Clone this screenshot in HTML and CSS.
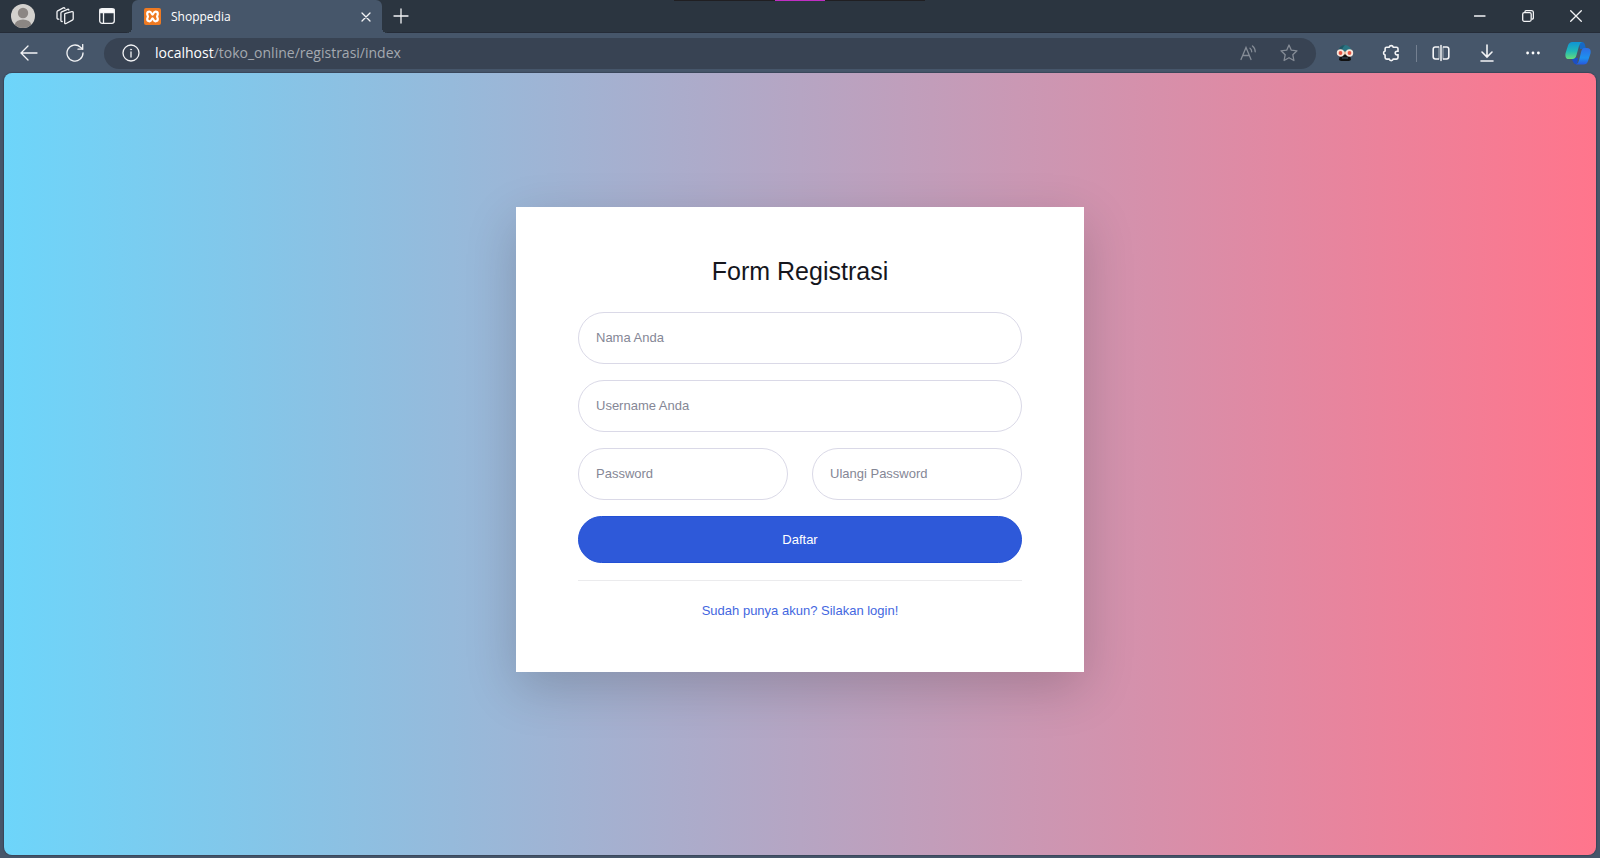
FILE: index.html
```html
<!DOCTYPE html>
<html lang="id">
<head>
<meta charset="utf-8">
<title>Shoppedia</title>
<link rel="stylesheet" href="styles.css">
</head>
<body>
<div class="browser">
  <header class="tabbar">
    <div class="tab-tools">
      <button class="icon-btn" aria-label="Profil"><svg width="24" height="24" viewBox="0 0 24 24"><defs><clipPath id="face"><circle cx="12" cy="12" r="12"/></clipPath></defs><g clip-path="url(#face)"><rect width="24" height="24" fill="#d3d1ce"/><circle cx="12" cy="9" r="5.2" fill="#8b8683"/><ellipse cx="12" cy="21" rx="8.2" ry="5.6" fill="#8b8683"/></g></svg></button>
      <button class="icon-btn" aria-label="Ruang kerja"><svg width="18" height="18" viewBox="0 0 18 18" class="line"><path d="M9.600 6.300l6.200-1.700q1.400-.3 1.400 1v6.200q0 .9-.9 1.300l-6.200 3.400q-1.400.6-1.400-.8V7.300q0-.8.900-1z"/><path d="M6.200 14.500q-1.300.2-1.300-1V6.200q0-.9.800-1.300L11.500 2.300q1.100-.3 1.400.7"/><path d="M2.800 12.200Q1 12.300 1 10.800V5q0-.8.700-1.200L7.300.9q1-.4 1.600.4"/></svg></button>
      <button class="icon-btn" aria-label="Menu tab"><svg width="18" height="18" viewBox="0 0 18 18" class="line"><rect x="1.700" y="1.700" width="14.600" height="14.600" rx="2.500"/><path d="M2 2.500h14v3H2z" fill="#fff"/><path d="M5.500 6v10"/></svg></button>
    </div>
    <div class="tab">
      <svg width="17" height="17" viewBox="0 0 17 17"><rect width="17" height="17" rx="2" fill="#ef7a22"/><path d="M8.500 6.600C7.600 6.600 7.600 3.700 5.500 3.700c-1.400 0-2.300.9-2.300 2.200 0 1.100.7 1.700.7 2.600s-.7 1.500-.7 2.600c0 1.300.9 2.200 2.300 2.200 2.100 0 2.100-2.900 3-2.900s.9 2.900 3 2.900c1.400 0 2.300-.9 2.300-2.200 0-1.100-.7-1.700-.7-2.600s.7-1.500.7-2.600c0-1.300-.9-2.200-2.300-2.200-2.100 0-2.100 2.900-3 2.900z" fill="none" stroke="#fff" stroke-width="2.200"/></svg>
      <span class="tab-title">Shoppedia</span>
      <button class="icon-btn tab-close" aria-label="Tutup tab"><svg width="10" height="10" viewBox="0 0 10 10" class="line"><path d="M1 1l8 8M9 1L1 9"/></svg></button>
    </div>
    <button class="icon-btn new-tab" aria-label="Tab baru"><svg width="16" height="16" viewBox="0 0 16 16" class="line"><path d="M8 1v14M1 8h14"/></svg></button>
    <div class="top-strip"><i></i></div>
    <div class="window-controls">
      <button class="icon-btn" aria-label="Kecilkan"><svg width="12" height="12" viewBox="0 0 12 12" class="line"><path d="M.500 6h10.500"/></svg></button>
      <button class="icon-btn" aria-label="Pulihkan"><svg width="12" height="12" viewBox="0 0 12 12" class="line"><rect x=".7" y="2.700" width="8.500" height="8.600" rx="1.500"/><path d="M3 1.400Q3.400.7 4.300.7H9.500q1.900 0 1.900 1.900v5q0 1-.9 1.500"/></svg></button>
      <button class="icon-btn" aria-label="Tutup"><svg width="12" height="12" viewBox="0 0 12 12" class="line"><path d="M.7.700l10.600 10.600M11.300.7L.7 11.300"/></svg></button>
    </div>
  </header>
  <nav class="toolbar">
    <div class="group">
      <button class="icon-btn" aria-label="Kembali"><svg width="18" height="16" viewBox="0 0 18 16" class="line"><path d="M17 8H1M8 1L1 8l7 7"/></svg></button>
      <button class="icon-btn" aria-label="Muat ulang"><svg width="18" height="18" viewBox="0 0 18 18" class="line"><path d="M17 9a8 8 0 1 1-2.500-5.800L16.500 5"/><path d="M16.700.5v4.700H12"/></svg></button>
    </div>
    <div class="address">
      <svg width="18" height="18" viewBox="0 0 18 18" class="line"><circle cx="9" cy="9" r="8"/><path d="M9 8v5"/><circle cx="9" cy="5.500" r=".6" fill="#fff" stroke-width=".6"/></svg>
      <div class="url"><b>localhost</b>/toko_online/registrasi/index</div>
      <button class="icon-btn dim" aria-label="Baca keras"><svg width="18" height="16" viewBox="0 0 18 16" class="line"><path d="M2 14.500L7 2.500l5 12M3.700 10.500h6.600M11 3.200q1.700 1.200 1.700 3.600M13.500.9q2.700 2.200 2.700 5.900"/></svg></button>
      <button class="icon-btn dim" aria-label="Favorit"><svg width="18" height="18" viewBox="0 0 18 18" class="line"><path d="M9 1l2.300 5.200 5.700.6-4.200 3.900 1.100 5.800L9 13.700l-4.900 2.800 1.100-5.800L1 6.800l5.700-.6z" stroke-linejoin="round"/></svg></button>
    </div>
    <div class="group">
      <button class="icon-btn" aria-label="Ekstensi penyamaran"><svg width="18" height="18" viewBox="0 0 18 18"><path d="M2.500 8.500V7.500a6.500 6.500 0 0 1 13 0v1z" fill="#2a7583"/><path d="M9 1a6.500 6.500 0 0 0-6.500 7H6q0-4.500 3-7z" fill="#205563"/><path d="M4 7.500h10V11H4z" fill="#e9b99b"/><path d="M3 16Q3 10.500 9 10.500T15 16l-2 1H5z" fill="#111"/><path d="M6 14h6" stroke="#46566a"/><circle cx="4.500" cy="9" r="2.800" fill="#e75442" stroke="#f6e5da" stroke-width="1.800"/><circle cx="13.500" cy="9" r="2.800" fill="#e75442" stroke="#f6e5da" stroke-width="1.800"/></svg></button>
      <button class="icon-btn" aria-label="Ekstensi"><svg width="18" height="18" viewBox="0 0 18 18" class="line bold"><path d="M4.600 3.200h2.500a2.200 2.200 0 0 1 4.200 0h3.200q1.500 0 1.500 1.500v2.600h-1a1.800 1.800 0 0 0 0 3.600h1v2.700q0 1.500-1.500 1.500h-3.200a2.200 2.200 0 0 1-4.200 0H4.600q-1.500 0-1.500-1.500v-2.500a2.200 2.200 0 0 1 0-4.200V4.700q0-1.500 1.500-1.500z"/></svg></button>
      <span class="separator"></span>
      <button class="icon-btn" aria-label="Layar terpisah"><svg width="18" height="18" viewBox="0 0 18 18" class="line"><rect x="1.200" y="3" width="15.600" height="12" rx="2.200" stroke-width="1.600"/><path d="M9 1v16" stroke="#46566a" stroke-width="4" stroke-linecap="butt"/><path d="M7 3v12M11 3v12" stroke-width=".8" opacity=".7"/><path d="M9 1.500v15" stroke-width="1.500"/></svg></button>
      <button class="icon-btn" aria-label="Unduhan"><svg width="14" height="18" viewBox="0 0 14 18" class="line bold"><path d="M7 1v12M2 8l5 5 5-5M1 17h12"/></svg></button>
      <button class="icon-btn" aria-label="Lainnya"><svg width="14" height="4" viewBox="0 0 14 4" fill="#fff"><circle cx="1.600" cy="2" r="1.400"/><circle cx="7" cy="2" r="1.400"/><circle cx="12.400" cy="2" r="1.400"/></svg></button>
      <button class="icon-btn copilot" aria-label="Copilot"><svg width="26" height="24" viewBox="0 0 26 24"><defs><linearGradient id="ca" x1="0" y1="0" x2="0" y2="1"><stop offset="0" stop-color="#0f93d4"/><stop offset=".55" stop-color="#22b8b5"/><stop offset="1" stop-color="#66dc7c"/></linearGradient><linearGradient id="cb" x1="0" y1="0" x2="0" y2="1"><stop offset="0" stop-color="#2e6de5"/><stop offset=".6" stop-color="#1e90ee"/><stop offset="1" stop-color="#2759dd"/></linearGradient></defs><path d="M14 1h3.500q1.800 0 2.400 2.500L21 8h-6z" fill="#1769c4"/><path d="M6 17h7l-1 6.500q-3 0-4-3z" fill="#1c4fc4"/><path d="M7.500 1H17q-2 .5-3 4l-2.500 9q-1 4-4 4H4Q-.5 18 .6 12L3 4.500Q4 1 7.500 1z" fill="url(#ca)"/><path d="M18.500 23.500H11q2-.5 3-4l2.200-9Q17 7 19.500 7H22q4.500 0 3.500 5.500L23 20q-1 3.500-4.500 3.500z" fill="url(#cb)"/></svg></button>
    </div>
  </nav>
  <main class="page">
    <form class="card">
      <h1>Form Registrasi</h1>
      <div class="fields">
        <input class="field wide" type="text" placeholder="Nama Anda" aria-label="Nama Anda">
        <input class="field wide" type="text" placeholder="Username Anda" aria-label="Username Anda">
        <input class="field" type="password" placeholder="Password" aria-label="Password">
        <input class="field" type="password" placeholder="Ulangi Password" aria-label="Ulangi Password">
        <button class="submit wide" type="submit">Daftar</button>
      </div>
      <hr>
      <a class="login" href="#">Sudah punya akun? Silakan login!</a>
    </form>
  </main>
</div>
</body>
</html>
```
FILE: styles.css
```css
* { box-sizing: border-box; }
body { margin: 0; font-family: "Liberation Sans", Arial, sans-serif; }
button { font: inherit; border: 0; background: none; padding: 0; }
.browser { min-height: 100vh; display: flex; flex-direction: column; background: #46566a; }
.icon-btn { display: flex; align-items: center; justify-content: center; flex: none; color: #f3f4f6; }
.line { fill: none; stroke: currentColor; stroke-width: 1.3; stroke-linecap: round; flex: none; }
.bold { stroke-width: 1.6; }

.tabbar { position: relative; display: flex; height: 33px; background: #2b3540; border-bottom: 1px solid #252c38; color: #fff; }
.tab-tools { display: flex; width: 132px; padding-left: 2px; }
.tab-tools .icon-btn { width: 42px; }
.tab { position: relative; display: flex; align-items: center; width: 250px; height: 33px; padding: 0 11px 0 12px; background: #46566a; border-radius: 6px 6px 0 0; font: 12px "Open Sans", "Noto Sans", sans-serif; }
.tab::before, .tab::after { content: ""; position: absolute; bottom: 0; width: 5px; height: 5px; }
.tab::before { right: 100%; background: radial-gradient(circle at 0 0, #2b3540 5px, #46566a 5px); }
.tab::after { left: 100%; background: radial-gradient(circle at 100% 0, #2b3540 5px, #46566a 5px); }
.tab-title { flex: 1; margin-left: 10px; }
.new-tab { width: 37px; }
.top-strip { position: absolute; top: 0; left: 50%; width: 251px; height: 1px; margin-left: -126px; background: #201f22; display: flex; justify-content: center; }
.top-strip i { width: 50px; background: #c02ec4; }
.window-controls { display: flex; margin-left: auto; }
.window-controls .icon-btn { width: 48px; }

.toolbar { display: flex; align-items: center; height: 40px; gap: 6px; padding-left: 6px; }
.group { display: flex; align-items: center; }
.group .icon-btn { width: 46px; height: 32px; }
.group .copilot { width: 44px; }
.separator { width: 1px; height: 17px; margin: 0 1px 0 2px; background: #748091; }
.address { flex: 1; display: flex; align-items: center; height: 31px; padding: 0 7px 0 18px; border-radius: 16px; background: #384353; color: #f3f4f6; }
.address .dim { width: 41px; color: #858c96; }
.url { flex: 1; margin-left: 15px; font: 14px/20px "Open Sans", "Noto Sans", sans-serif; color: #a4a9b0; }
.url b { font-weight: 400; color: #fff; }

.page { flex: 1; display: flex; justify-content: center; align-items: flex-start; margin: 0 4px 3px; padding: 134px 16px 48px; border-radius: 8px; background: linear-gradient(to right, #6dd5fa, #ff758c); box-shadow: 0 0 1px 1px #39465a; }
.card { display: flex; flex-direction: column; width: 100%; max-width: 568px; padding: 48px 62px 51px; background: #fff; box-shadow: 0 16px 48px rgba(0, 0, 0, .18); }
h1 { margin: 0 0 25px; font-size: 25px; line-height: 32px; font-weight: 400; text-align: center; color: #15161d; }
.fields { display: grid; grid-template-columns: 1fr 1fr; gap: 16px 24px; }
.wide { grid-column: 1 / -1; }
.field { width: 100%; min-width: 0; height: 52px; padding: 0 17px 2px; border: 1px solid #dad9e7; border-radius: 26px; background: #fff; font: 13px "Liberation Sans", Arial, sans-serif; }
.field::placeholder { color: #858796; opacity: 1; }
.submit { height: 47px; border: 1px solid #2250d5; border-radius: 24px; background: #2e59d9; color: #fff; font-size: 13px; }
hr { width: 100%; margin: 17px 0 20px; border: 0; border-top: 1px solid #ebebed; }
.login { align-self: center; font-size: 13px; line-height: 20px; color: #4467df; text-decoration: none; }
```
